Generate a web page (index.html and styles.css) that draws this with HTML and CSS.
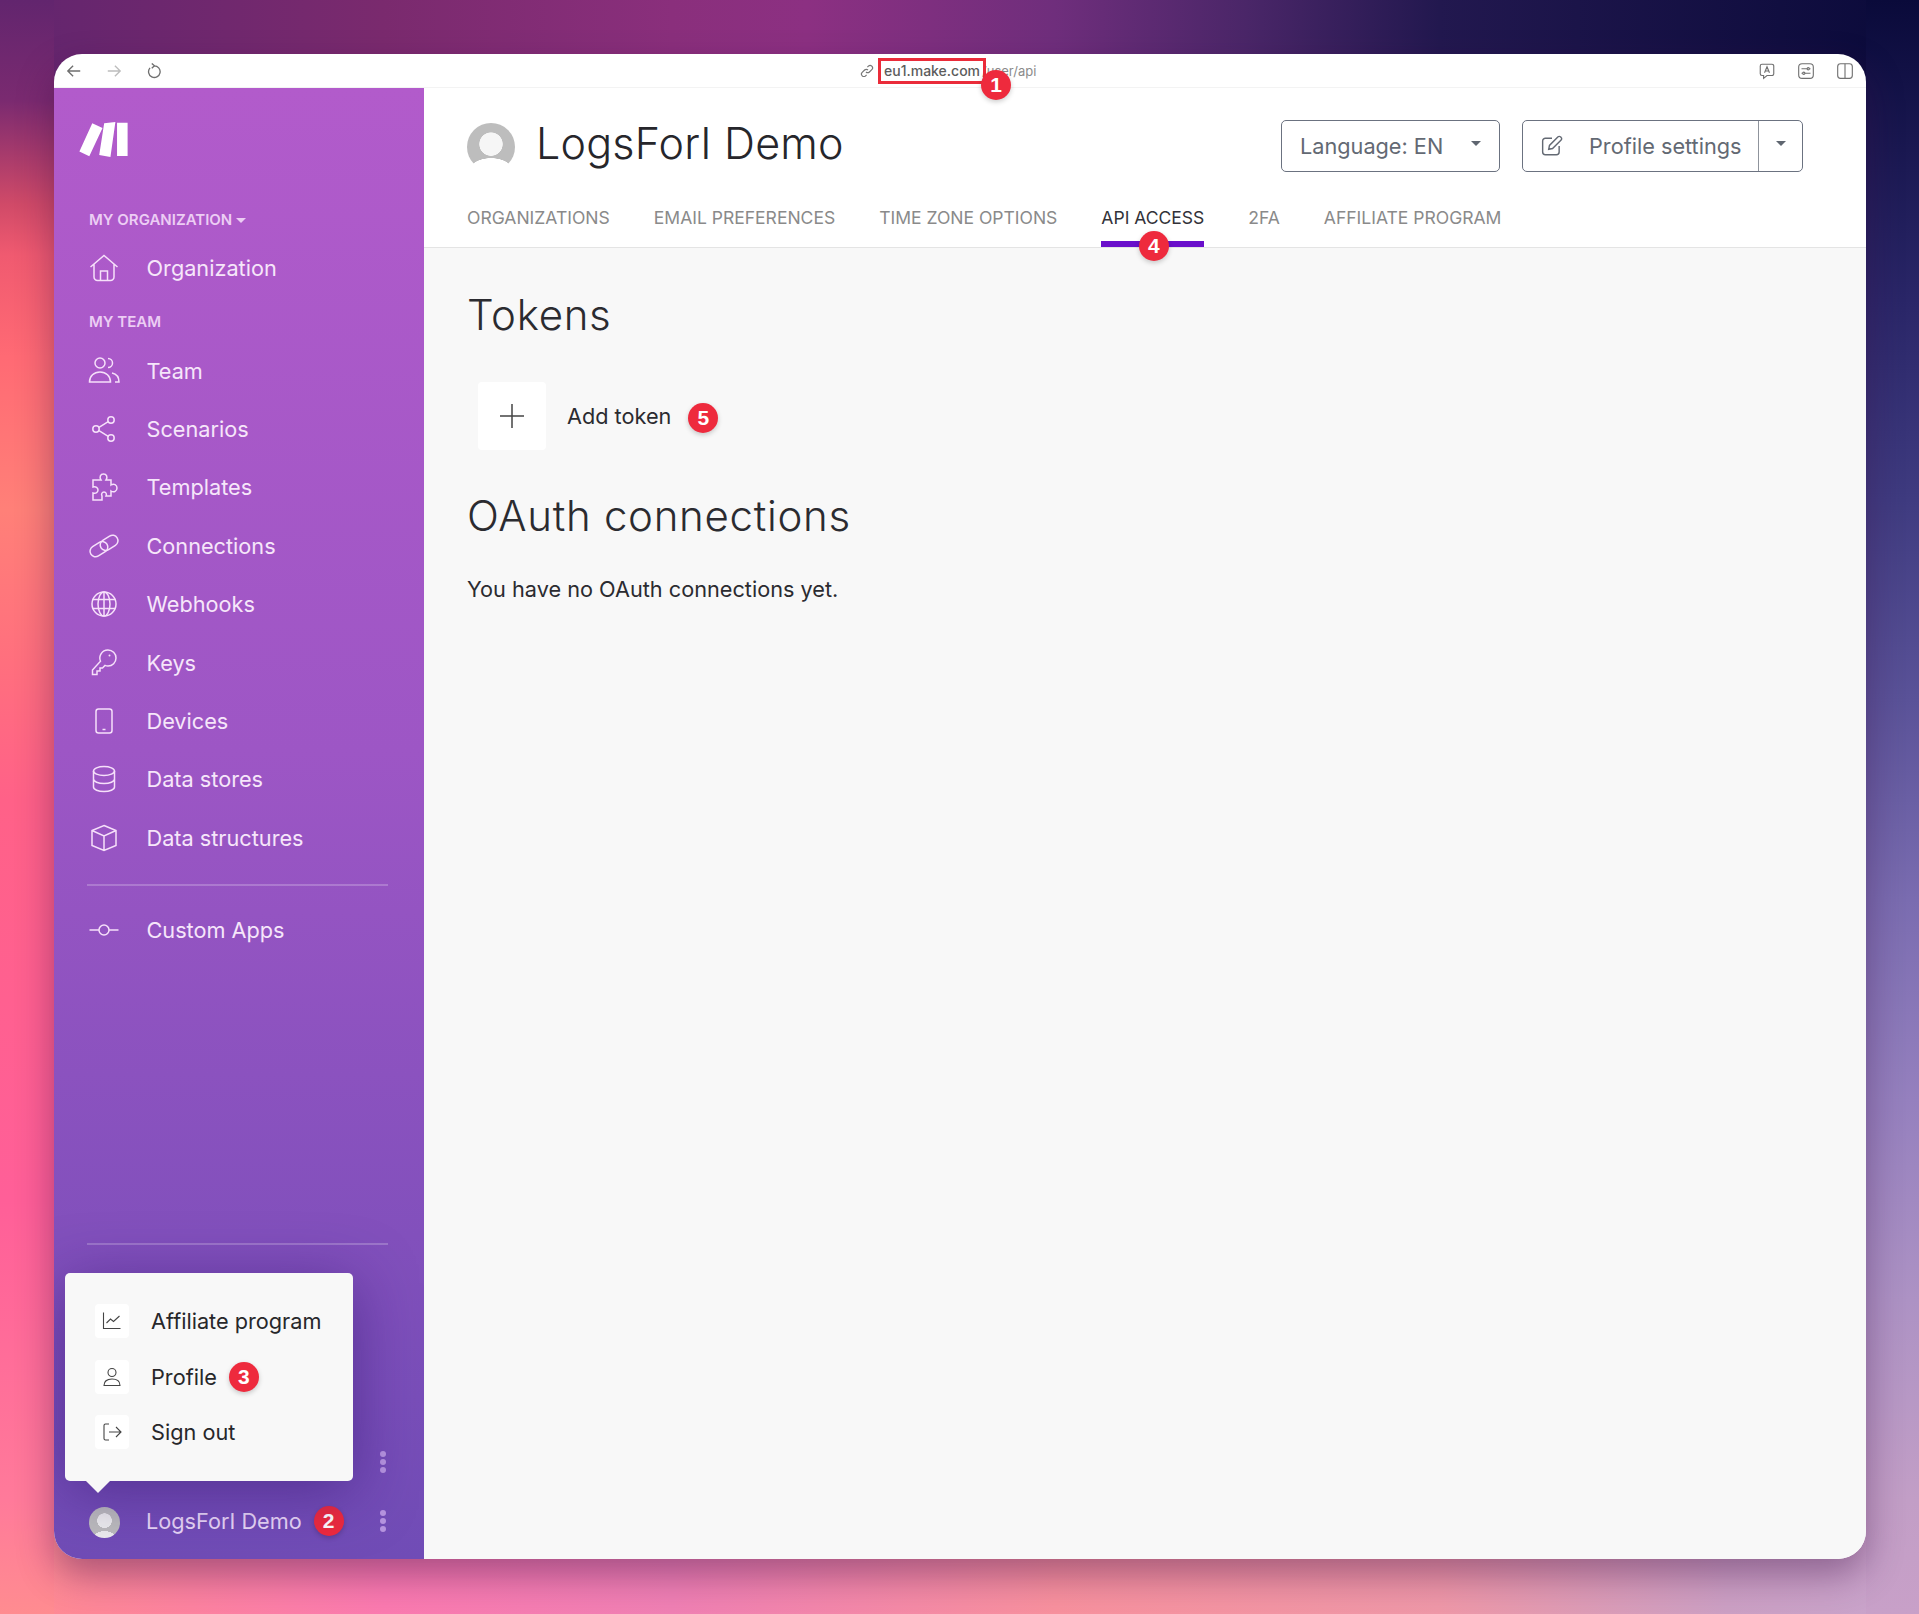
FILE: index.html
```html
<!DOCTYPE html>
<html lang="en">
<head>
    <meta charset="UTF-8">
    <meta name="viewport" content="width=device-width, initial-scale=1.0">
    <title>LogsForI Demo - API access</title>
    <link rel="stylesheet" href="styles.css">
</head>
<body>
<div class="window">
    <div class="browser-bar">
        <div class="bar-nav">
            <svg class="bar-icon" viewBox="0 0 18 18"><path d="M16 9H2M8 3 2 9l6 6"/></svg>
            <svg class="bar-icon faded" viewBox="0 0 18 18"><path d="M2 9h14M10 3l6 6-6 6"/></svg>
            <svg class="bar-icon" viewBox="0 0 18 18"><path d="M4.500 5.500a6.500 6.500 0 1 0 4.500-2.200M6.500 0.500 9.500 3.200 6.500 6"/></svg>
        </div>
        <div class="address">
            <svg class="link-icon" viewBox="0 0 14 14"><path d="M6 8a2.400 2.400 0 0 0 3.400 0l2.400-2.400A2.400 2.400 0 0 0 8.400 2.200L7.400 3.200M8 6a2.400 2.400 0 0 0-3.400 0L2.200 8.400a2.400 2.400 0 0 0 3.400 3.400l1-1"/></svg>
            <span class="host">eu1.make.com<span class="badge badge-url">1</span></span><span class="url-path">/user/api</span>
        </div>
        <div class="bar-tools">
            <svg class="tool-icon" viewBox="0 0 16 16"><path d="M3.500 2h9A1.500 1.500 0 0 1 14 3.500v7a1.500 1.500 0 0 1-1.500 1.500H8l-3 2.500V12H3.500A1.500 1.500 0 0 1 2 10.500v-7A1.500 1.500 0 0 1 3.500 2ZM5.800 9.500 8 4.200l2.200 5.300M6.600 8h2.800"/></svg>
            <svg class="tool-icon" viewBox="0 0 16 16"><rect x="1.500" y="1.500" width="13" height="13" rx="3"/><path d="M4 6h5M11 6h1M4 10h1M7 10h5"/><circle cx="10" cy="6" r="1"/><circle cx="6" cy="10" r="1"/></svg>
            <svg class="tool-icon" viewBox="0 0 16 16"><rect x="1.500" y="1.500" width="13" height="13" rx="2.500"/><path d="M8 1.500v13"/></svg>
        </div>
    </div>

    <div class="app">
        <aside class="sidebar">
            <svg class="logo" viewBox="118 244 146 106"><path d="M157 248l31 14-40 86-30-15ZM193 248l34-4-15 106-34-6ZM232 246h32v101h-32Z"/></svg>

            <div class="nav-label org-label">MY ORGANIZATION <span class="caret"></span></div>
            <a class="nav-item">
                <svg class="nav-icon" viewBox="0 0 32 32"><path d="M2.500 15 16 3.500 29.500 15M6 12.500V25a3.500 3.500 0 0 0 3.500 3.500h13A3.500 3.500 0 0 0 26 25V12.500M12.500 28.500V19h7v9.500"/></svg>
                Organization
            </a>
            <div class="nav-label team-label">MY TEAM</div>
            <a class="nav-item">
                <svg class="nav-icon" viewBox="0 0 32 32"><circle cx="12" cy="8" r="5"/><path d="M20 3.500a4.500 4.500 0 0 1 0 9M1.500 27c0-6 4.500-10 10.500-10s10.500 4 10.500 10ZM24 18c4.500 1 7 4.500 7 9h-4"/></svg>
                Team
            </a>
            <a class="nav-item">
                <svg class="nav-icon" viewBox="0 0 32 32"><circle cx="8" cy="16" r="3.200"/><circle cx="23" cy="7" r="3.200"/><circle cx="23" cy="25" r="3.200"/><path d="m11 14.300 9.200-5.600M11 17.700l9.200 5.600"/></svg>
                Scenarios
            </a>
            <a class="nav-item">
                <svg class="nav-icon" viewBox="0 0 32 32"><path d="M5 9H13C11 6 12.500 3 15.500 3S20 6 18 9H23V14C26 12 29 14 29 17S26 22 23 20V25H18C19 23 18 21 16 21S13 23 14 25V29H5V22C8 23 10 21 10 19S8 15 5 16Z"/></svg>
                Templates
            </a>
            <a class="nav-item">
                <svg class="nav-icon" viewBox="0 0 32 32"><g transform="rotate(-32 16 16)"><rect x="0.500" y="10.500" width="19" height="11" rx="5.500"/><rect x="12.500" y="10.500" width="19" height="11" rx="5.500"/></g></svg>
                Connections
            </a>
            <a class="nav-item">
                <svg class="nav-icon" viewBox="0 0 32 32"><circle cx="16" cy="16" r="12"/><ellipse cx="16" cy="16" rx="6" ry="12"/><path d="M4.500 11.500h23M4.500 20.500h23M16 4v24"/></svg>
                Webhooks
            </a>
            <a class="nav-item">
                <svg class="nav-icon" viewBox="0 0 32 32"><path d="M20 3a8 8 0 0 1 0 16 8 8 0 0 1-3-.6L14.500 21H12v3H9v3.500H4.500V23L12.500 14.200A8 8 0 0 1 20 3Z"/><circle cx="21.500" cy="8.500" r="1" class="dot"/></svg>
                Keys
            </a>
            <a class="nav-item">
                <svg class="nav-icon" viewBox="0 0 32 32"><rect x="8" y="4" width="16" height="24" rx="2.500"/><path d="M14.500 24.500h3"/></svg>
                Devices
            </a>
            <a class="nav-item">
                <svg class="nav-icon" viewBox="0 0 32 32"><ellipse cx="16" cy="8" rx="10.500" ry="4.500"/><path d="M5.500 8v16c0 2.500 4.700 4.500 10.500 4.500s10.500-2 10.500-4.500V8M5.500 16c0 2.500 4.700 4.500 10.500 4.500s10.500-2 10.500-4.500"/></svg>
                Data stores
            </a>
            <a class="nav-item">
                <svg class="nav-icon" viewBox="0 0 32 32"><path d="M16 3.500 28 8.500v15l-12 5-12-5v-15ZM4 8.500l12 5.500 12-5.500M16 14v14.500"/></svg>
                Data structures
            </a>
            <div class="side-rule"></div>
            <a class="nav-item">
                <svg class="nav-icon" viewBox="0 0 32 32"><circle cx="16" cy="16" r="5"/><path d="M1.500 16H11M21 16h9.500"/></svg>
                Custom Apps
            </a>

            <div class="side-foot">
                <div class="side-rule"></div>
                <div class="foot-row"><span class="dots"></span></div>
                <div class="foot-row">
                    <span class="avatar avatar-small"></span>
                    <span class="foot-name">LogsForI Demo<span class="badge badge-inline">2</span></span>
                    <span class="dots"></span>
                </div>
            </div>

            <div class="popup">
                <a class="popup-item">
                    <span class="popup-icon"><svg viewBox="0 0 20 20"><path d="M1.500 1.500v16h17M4.500 12l4-4 3 2.500 6-5.500"/></svg></span>
                    Affiliate program
                </a>
                <a class="popup-item">
                    <span class="popup-icon"><svg viewBox="0 0 20 20"><circle cx="10" cy="5.500" r="4"/><path d="M2 18.500c0-4 3-6.500 8-6.500s8 2.500 8 6.500Z"/></svg></span>
                    Profile<span class="badge badge-popup">3</span>
                </a>
                <a class="popup-item">
                    <span class="popup-icon"><svg viewBox="0 0 20 20"><path d="M7 2H3.500A1.500 1.500 0 0 0 2 3.500v13A1.500 1.500 0 0 0 3.500 18H7M7 10h12M14 5l5 5-5 5"/></svg></span>
                    Sign out
                </a>
            </div>
        </aside>

        <main class="content">
            <header class="page-head">
                <div class="head-top">
                    <span class="avatar avatar-big"></span>
                    <h1>LogsForI Demo</h1>
                    <div class="head-actions">
                        <button class="btn btn-lang">Language: EN <span class="caret caret-dark"></span></button>
                        <div class="btn btn-profile">
                            <span class="btn-main">
                                <svg class="pencil" viewBox="0 0 20 20"><path d="M10 3H4a2.500 2.500 0 0 0-2.500 2.500v10A2.500 2.500 0 0 0 4 18h10a2.500 2.500 0 0 0 2.500-2.500V10M7 13l.7-3.500L15.500 1.700a1.500 1.500 0 0 1 2.200 0l.6.600a1.500 1.500 0 0 1 0 2.200L10.500 12.300Z"/></svg>
                                Profile settings
                            </span>
                            <span class="btn-side"><span class="caret caret-dark"></span></span>
                        </div>
                    </div>
                </div>
                <nav class="tabs">
                    <a class="tab">ORGANIZATIONS</a>
                    <a class="tab">EMAIL PREFERENCES</a>
                    <a class="tab">TIME ZONE OPTIONS</a>
                    <a class="tab tab-active">API ACCESS<span class="badge badge-tab">4</span></a>
                    <a class="tab">2FA</a>
                    <a class="tab">AFFILIATE PROGRAM</a>
                </nav>
            </header>

            <section class="page-body">
                <h2 class="tokens-title">Tokens</h2>
                <div class="add-token">
                    <span class="add-box"><svg viewBox="0 0 24 24"><path d="M12 0v24M0 12h24"/></svg></span>
                    <span>Add token</span><span class="badge badge-add">5</span>
                </div>
                <h2 class="oauth-title">OAuth connections</h2>
                <p class="empty-note">You have no OAuth connections yet.</p>
            </section>
        </main>
    </div>
</div>
</body>
</html>
```

FILE: styles.css
```css
* {
    box-sizing: border-box;
}
html, body {
    margin: 0;
    height: 1614px;
    overflow: hidden;
}
body {
    font-family: Inter, "Liberation Sans", sans-serif;
    padding: 54px 53px 0 54px;
    background:
        linear-gradient(180deg, #62256e 0, #7a2a70 100px, #d04a68 204px, #f05a70 255px, #ff6a74 357px, #ff8078 510px, #ff6f7e 663px, #ff6188 800px, #ff5f98 1200px, #ff7a9a 1500px, #ff8c90 1614px) left / 54px 100% no-repeat,
        linear-gradient(180deg, #0a0a3a 0, #2a2668 300px, #3f3b80 500px, #5a5298 700px, #7a6cb0 900px, #9580be 1100px, #ad92c4 1300px, #c29ec6 1500px, #c8a0c8 1614px) right / 53px 100% no-repeat,
        linear-gradient(90deg, #62256e 0, #7a2a6e 20%, #8a2f7c 35%, #8c3082 42%, #6f2e7c 55%, #4a2668 65%, #22184f 75%, #0a0a3a 100%) top / 100% 90px no-repeat,
        linear-gradient(90deg, #ff8c90 0, #fb7ab0 20%, #f080b4 35%, #f8919e 55%, #ef98a8 75%, #cca0c4 90%, #c8a4cc 100%) bottom / 100% 90px no-repeat,
        #c070a0;
}

.window {
    width: 1812px;
    height: 1505px;
    border-radius: 28px;
    background: #fff;
    box-shadow: 0 16px 36px rgba(60, 15, 70, 0.42);
    overflow: hidden;
    display: flex;
    flex-direction: column;
}

/* browser toolbar */
.browser-bar {
    height: 34px;
    flex: none;
    display: flex;
    align-items: center;
    padding: 0 12px 0 12px;
    border-bottom: 1px solid #f3f3f3;
    position: relative;
}
.bar-nav {
    display: flex;
    gap: 24px;
}
.bar-icon {
    width: 16px;
    height: 16px;
    fill: none;
    stroke: #6f6f6f;
    stroke-width: 1.5;
}
.bar-icon.faded {
    stroke: #bdbdbd;
}
.address {
    margin-left: 698px;
    display: flex;
    align-items: center;
    font-size: 13px;
    color: #8b8b8b;
}
.link-icon {
    width: 14px;
    height: 14px;
    margin-right: 10px;
    fill: none;
    stroke: #777;
    stroke-width: 1.2;
}
.host {
    position: relative;
    color: #5c5c5c;
    font-size: 14px;
    font-weight: 500;
    margin-right: 2px;
    outline: 3px solid #ea2c3a;
    outline-offset: 3px;
    height: 14px;
    line-height: 14px;
}
.url-path {
    white-space: nowrap;
}
.bar-tools {
    margin-left: auto;
    display: flex;
    gap: 21px;
}
.tool-icon {
    width: 18px;
    height: 18px;
    fill: none;
    stroke: #707070;
    stroke-width: 1;
}

.app {
    flex: 1;
    display: flex;
    min-height: 0;
}

/* sidebar */
.sidebar {
    width: 370px;
    flex: none;
    position: relative;
    display: flex;
    flex-direction: column;
    padding: 34px 36px 0 34px;
    color: #f6e6fa;
    background: linear-gradient(180deg, #b25bcb 0, #9d56c5 45%, #704cb6 100%);
}
.logo {
    width: 49px;
    height: 35px;
    margin-left: -9px;
    fill: #fff;
    flex: none;
}
.nav-label {
    font-size: 15px;
    font-weight: 600;
    color: #eccdf4;
    line-height: 18px;
}
.org-label {
    margin-top: 54px;
    margin-bottom: 10px;
    margin-left: 1px;
}
.team-label {
    margin-top: 16px;
    margin-bottom: 10px;
    margin-left: 1px;
}
.caret {
    display: inline-block;
    width: 0;
    height: 0;
    border-left: 5px solid transparent;
    border-right: 5px solid transparent;
    border-top: 5px solid #eccdf4;
    vertical-align: 2px;
}
.caret-dark {
    border-top-color: #5f6670;
}
.nav-item {
    height: 58.400px;
    flex: none;
    display: flex;
    align-items: center;
    gap: 26.500px;
    font-size: 21.700px;
}
.nav-icon {
    width: 32px;
    height: 32px;
    flex: none;
    fill: none;
    stroke: #f6e0fa;
    stroke-width: 1.500;
}
.nav-icon .dot {
    fill: #f6e0fa;
    stroke: none;
}
.side-rule {
    height: 2px;
    flex: none;
    background: rgba(255, 255, 255, 0.22);
    margin: 17px 0 15px -1px;
}

.side-foot {
    margin-top: auto;
    padding-bottom: 8px;
    display: flex;
    flex-direction: column;
}
.side-foot .side-rule {
    margin: 0 0 0 -1px;
}
.foot-row {
    height: 61px;
    flex: none;
    display: flex;
    align-items: center;
    color: #e9d8f7;
    font-size: 21.700px;
}
.side-foot .side-rule + .foot-row {
    height: 245px;
    align-items: flex-end;
    padding-bottom: 25px;
}
.foot-name {
    display: flex;
    align-items: center;
    margin-left: 26px;
}
.dots {
    width: 6px;
    height: 6px;
    margin-left: auto;
    margin-right: 2px;
    border-radius: 50%;
    background: #b795e0;
    box-shadow: 0 -8px 0 #b795e0, 0 8px 0 #b795e0;
}

.avatar {
    display: block;
    flex: none;
    border-radius: 50%;
}
.avatar-small {
    width: 31px;
    height: 31px;
    margin-left: 1px;
    margin-top: 4px;
    background:
        radial-gradient(ellipse 11px 7px at 50% 100%, #eee 97%, transparent 100%),
        radial-gradient(circle 7.500px at 50% 44%, #eee 95%, transparent 100%),
        #bdbdbd;
}
.avatar-big {
    width: 48px;
    height: 48px;
    background:
        radial-gradient(ellipse 22px 13px at 50% 100%, #fff 97%, transparent 100%),
        radial-gradient(circle 12px at 50% 44%, #f6f6f6 95%, transparent 100%),
        #bdbdbd;
}

/* popup over the sidebar */
.popup {
    position: absolute;
    left: 11px;
    top: 1185px;
    width: 288px;
    height: 208px;
    border-radius: 5px;
    background: #f8f8f8;
    padding: 31px 0 0 30px;
    color: #27272a;
    font-size: 21.700px;
    box-shadow: 0 10px 60px rgba(50, 20, 110, 0.5);
}
.popup::after {
    content: "";
    position: absolute;
    left: 20px;
    bottom: -12px;
    border-left: 13px solid transparent;
    border-right: 13px solid transparent;
    border-top: 13px solid #f8f8f8;
}
.popup-item {
    display: flex;
    align-items: center;
    gap: 22px;
    height: 34px;
    margin-bottom: 21.500px;
}
.popup-icon {
    width: 34px;
    height: 34px;
    flex: none;
    border-radius: 4px;
    background: #fff;
    display: flex;
    align-items: center;
    justify-content: center;
}
.popup-icon svg {
    width: 20px;
    height: 20px;
    fill: none;
    stroke: #444;
    stroke-width: 1.100;
}

/* main area */
.content {
    flex: 1;
    min-width: 0;
    display: flex;
    flex-direction: column;
    background: #f8f8f8;
}
.page-head {
    height: 160px;
    flex: none;
    background: #fff;
    border-bottom: 1px solid #e4e4e4;
    padding: 0 0 0 43px;
}
.head-top {
    height: 107px;
    display: flex;
    align-items: center;
    padding-top: 10px;
    padding-right: 63px;
}
h1 {
    margin: 0 0 0 21px;
    font-size: 43px;
    font-weight: 300;
    color: #26262b;
    letter-spacing: 0.200px;
    position: relative;
    top: -4px;
}
.head-actions {
    margin-left: auto;
    display: flex;
    gap: 22px;
    margin-top: -2px;
}
.btn {
    height: 52px;
    border: 1px solid #6b7280;
    border-radius: 5px;
    background: #fff;
    color: #636973;
    font: 400 21.700px Inter, "Liberation Sans", sans-serif;
    display: flex;
    align-items: center;
    white-space: nowrap;
}
.btn-lang {
    width: 219px;
    padding: 0 18px;
    justify-content: space-between;
}
.btn-lang .caret,
.btn-side .caret {
    margin-top: -4px;
}
.btn-profile {
    width: 281px;
}
.btn-main {
    width: 236px;
    height: 100%;
    display: flex;
    align-items: center;
    gap: 26px;
    padding-left: 18px;
    border-right: 1px solid #8f949c;
}
.pencil {
    width: 22px;
    height: 22px;
    fill: none;
    stroke: #636973;
    stroke-width: 1.300;
    flex: none;
}
.btn-side {
    flex: 1;
    display: flex;
    align-items: center;
    justify-content: center;
}

.tabs {
    display: flex;
    gap: 44px;
    height: 52px;
}
.tab {
    font-size: 17.530px;
    color: #8a8a8a;
    line-height: 22px;
    padding-top: 12px;
    position: relative;
    white-space: nowrap;
}
.tab-active {
    color: #323238;
    border-bottom: 6px solid #6a0fcb;
}

.page-body {
    flex: 1;
    padding: 0 0 0 43px;
    color: #2b2b30;
}
h2 {
    margin: 0;
    font-size: 42px;
    font-weight: 300;
    line-height: 50px;
    letter-spacing: 0.700px;
}
.tokens-title {
    margin-top: 42px;
}
.add-token {
    margin: 42px 0 0 11px;
    display: flex;
    align-items: center;
    font-size: 21.700px;
}
.add-box {
    width: 68px;
    height: 68px;
    border-radius: 4px;
    background: #fff;
    margin-right: 21px;
    display: flex;
    align-items: center;
    justify-content: center;
}
.add-box svg {
    width: 24px;
    height: 24px;
    fill: none;
    stroke: #444;
    stroke-width: 1.500;
}
.oauth-title {
    margin-top: 41px;
}
.empty-note {
    margin: 34px 0 0;
    font-size: 21.700px;
    line-height: 28px;
}

/* numbered callouts */
.badge {
    width: 30px;
    height: 30px;
    border-radius: 50%;
    background: #ee2a3d;
    color: #fff;
    font: 700 21px/30px "Liberation Sans", sans-serif;
    text-align: center;
    box-shadow: 0 2px 5px rgba(0, 0, 0, 0.2);
    flex: none;
    display: inline-block;
}
.badge-inline {
    margin-left: 12px;
}
.badge-popup {
    margin-left: -10px;
}
.badge-url {
    position: absolute;
    left: 97px;
    top: 6px;
}
.badge-tab {
    position: absolute;
    left: calc(50% - 14px);
    top: 36px;
}
.badge-add {
    margin-left: 17px;
    margin-top: 3px;
}
```
